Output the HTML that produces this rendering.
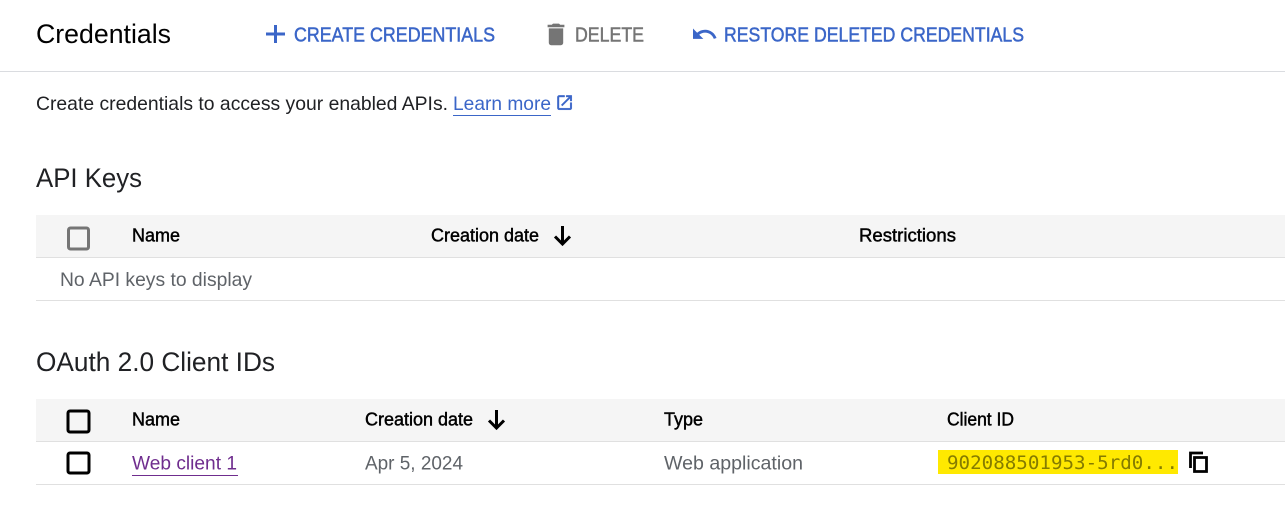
<!DOCTYPE html>
<html>
<head>
<meta charset="utf-8">
<style>
html,body{margin:0;padding:0;background:#fff;width:1285px;height:516px;overflow:hidden}
svg{display:block}
text{font-family:"Liberation Sans",sans-serif}
.m{font-size:18px;fill:#000;stroke:#000;stroke-width:.45}
.b{font-size:19.500px}
.h{font-size:26.500px}
.t{font-size:20.500px;stroke-width:.5}
</style>
</head>
<body>
<svg width="1285" height="516" viewBox="0 0 1285 516" xmlns="http://www.w3.org/2000/svg">
<rect width="1285" height="516" fill="#fff"/>
<rect x="0" y="71" width="1285" height="1" fill="#dadce0"/>

<text x="36" y="43" class="h" fill="#000" textLength="135" lengthAdjust="spacingAndGlyphs">Credentials</text>

<path d="M275.500 25v18M266 34h19" stroke="#3b66c8" stroke-width="3" fill="none"/>
<text x="294" y="41.500" class="t" fill="#3b66c8" stroke="#3b66c8" textLength="201" lengthAdjust="spacingAndGlyphs">CREATE CREDENTIALS</text>

<g transform="translate(541.600 20) scale(1.200)" fill="#757575"><path d="M6 19c0 1.100.9 2 2 2h8c1.100 0 2-.9 2-2V7H6v12zM19 4h-3.500l-1-1h-5l-1 1H5v2h14V4z"/></g>
<text x="575" y="41.500" class="t" fill="#757575" stroke="#757575" textLength="69" lengthAdjust="spacingAndGlyphs">DELETE</text>

<g transform="translate(690.700 20.500) scale(1.150)" fill="#3b66c8"><path d="M12.500 8c-2.650 0-5.050.99-6.900 2.600L2 7v9h9l-3.620-3.620c1.390-1.160 3.160-1.880 5.120-1.880 3.540 0 6.550 2.310 7.600 5.500l2.370-.78C21.080 11.030 17.150 8 12.500 8z"/></g>
<text x="724" y="41.500" class="t" fill="#3b66c8" stroke="#3b66c8" textLength="300" lengthAdjust="spacingAndGlyphs">RESTORE DELETED CREDENTIALS</text>

<text x="36" y="110" class="b" fill="#202124" textLength="412" lengthAdjust="spacingAndGlyphs">Create credentials to access your enabled APIs.</text>
<text x="453" y="110" class="b" fill="#3b66c8" textLength="98" lengthAdjust="spacingAndGlyphs">Learn more</text>
<rect x="453" y="115" width="98" height="1" fill="#3b66c8"/>
<g transform="translate(555 93) scale(.8)" fill="#3b66c8" stroke="#3b66c8" stroke-width=".5"><path d="M19 19H5V5h7V3H5c-1.110 0-2 .9-2 2v14c0 1.100.89 2 2 2h14c1.100 0 2-.9 2-2v-7h-2v7zM14 3v2h3.590l-9.830 9.830 1.410 1.410L19 6.410V10h2V3h-7z"/></g>

<text x="36" y="187" class="h" fill="#202124" textLength="106" lengthAdjust="spacingAndGlyphs">API Keys</text>

<rect x="36" y="215" width="1249" height="42" fill="#f5f5f5"/>
<rect x="36" y="257" width="1249" height="1" fill="#e0e0e0"/>
<rect x="68.500" y="228" width="20" height="21" rx="2" fill="none" stroke="#757575" stroke-width="3"/>
<text x="132" y="241.500" class="m" textLength="48" lengthAdjust="spacingAndGlyphs">Name</text>
<text x="431" y="241.500" class="m" textLength="108" lengthAdjust="spacingAndGlyphs">Creation date</text>
<path d="M562.500 226v18M555 236.500l7.500 7.500 7.500-7.500" stroke="#000" stroke-width="3" fill="none"/>
<text x="859" y="241.500" class="m" textLength="97" lengthAdjust="spacingAndGlyphs">Restrictions</text>
<text x="60" y="286" class="b" fill="#5f6368" textLength="192" lengthAdjust="spacingAndGlyphs">No API keys to display</text>
<rect x="36" y="300" width="1249" height="1" fill="#e0e0e0"/>

<text x="36" y="371" class="h" fill="#202124" textLength="239" lengthAdjust="spacingAndGlyphs">OAuth 2.0 Client IDs</text>

<rect x="36" y="399" width="1249" height="42" fill="#f5f5f5"/>
<rect x="36" y="441" width="1249" height="1" fill="#e0e0e0"/>
<rect x="68" y="411" width="21" height="21" rx="2" fill="none" stroke="#000" stroke-width="3"/>
<text x="132" y="425.500" class="m" textLength="48" lengthAdjust="spacingAndGlyphs">Name</text>
<text x="365" y="425.500" class="m" textLength="108" lengthAdjust="spacingAndGlyphs">Creation date</text>
<path d="M496.500 410v18M489 420.500l7.500 7.500 7.500-7.500" stroke="#000" stroke-width="3" fill="none"/>
<text x="664" y="425.500" class="m" textLength="39" lengthAdjust="spacingAndGlyphs">Type</text>
<text x="947" y="425.500" class="m" textLength="67" lengthAdjust="spacingAndGlyphs">Client ID</text>

<rect x="68" y="453" width="21" height="20" rx="2" fill="none" stroke="#000" stroke-width="3"/>
<text x="132" y="469.500" class="b" fill="#6f2d8e" textLength="105" lengthAdjust="spacingAndGlyphs">Web client 1</text>
<rect x="132" y="475" width="106" height="1" fill="#6f2d8e"/>
<text x="365" y="469.500" class="b" fill="#5f6368" textLength="98" lengthAdjust="spacingAndGlyphs">Apr 5, 2024</text>
<text x="664" y="469.500" class="b" fill="#5f6368" textLength="139" lengthAdjust="spacingAndGlyphs">Web application</text>
<rect x="938" y="450" width="240" height="24" fill="#ffe900"/>
<text x="947" y="469" font-size="19" style="font-family:'DejaVu Sans Mono',monospace" fill="#857c00" textLength="231" lengthAdjust="spacingAndGlyphs">902088501953-5rd0...</text>
<path d="M1190.500 468v-15h12.500M1194.500 457.500h12v14h-12z" fill="none" stroke="#000" stroke-width="2.800"/>
<rect x="36" y="484" width="1249" height="1" fill="#e0e0e0"/>
</svg>
</body>
</html>
